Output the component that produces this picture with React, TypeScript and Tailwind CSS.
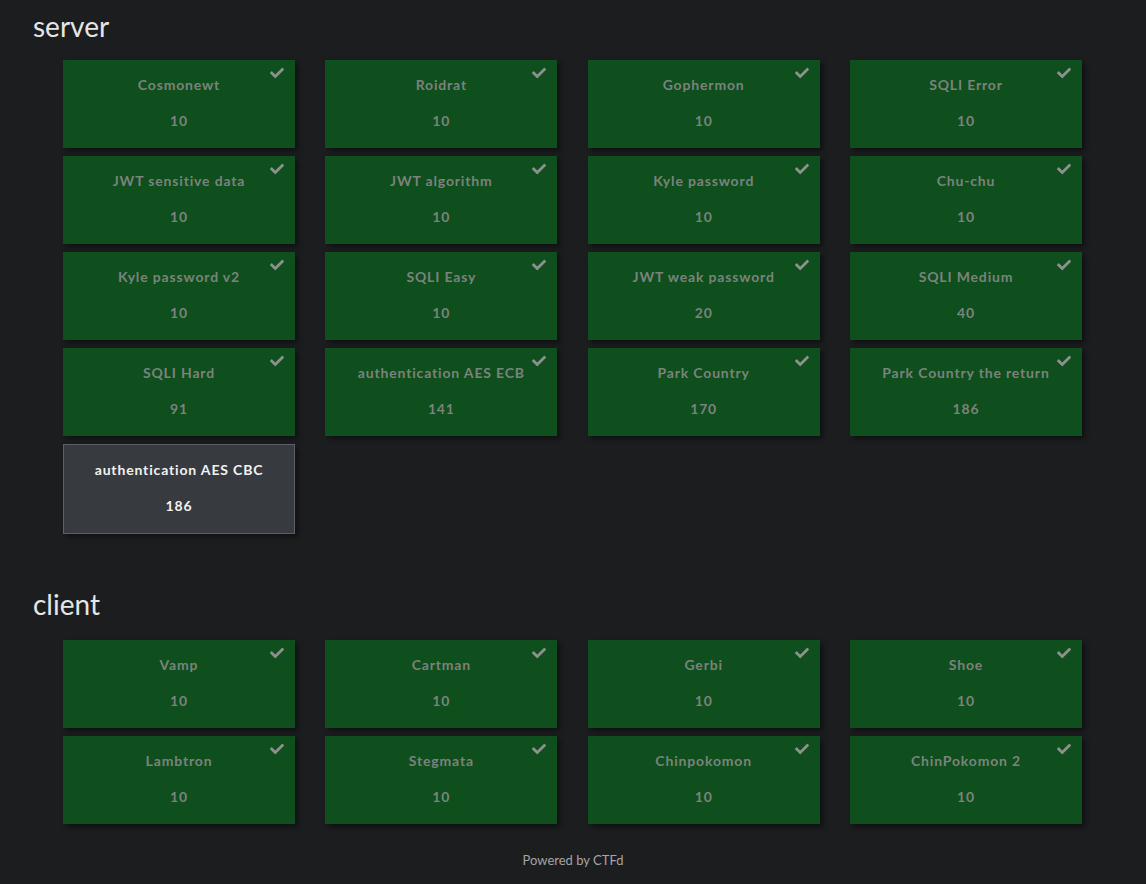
type Challenge = { name: string; value: number; solved: boolean };

const server: Challenge[] = [
  { name: "Cosmonewt", value: 10, solved: true },
  { name: "Roidrat", value: 10, solved: true },
  { name: "Gophermon", value: 10, solved: true },
  { name: "SQLI Error", value: 10, solved: true },
  { name: "JWT sensitive data", value: 10, solved: true },
  { name: "JWT algorithm", value: 10, solved: true },
  { name: "Kyle password", value: 10, solved: true },
  { name: "Chu-chu", value: 10, solved: true },
  { name: "Kyle password v2", value: 10, solved: true },
  { name: "SQLI Easy", value: 10, solved: true },
  { name: "JWT weak password", value: 20, solved: true },
  { name: "SQLI Medium", value: 40, solved: true },
  { name: "SQLI Hard", value: 91, solved: true },
  { name: "authentication AES ECB", value: 141, solved: true },
  { name: "Park Country", value: 170, solved: true },
  { name: "Park Country the return", value: 186, solved: true },
  { name: "authentication AES CBC", value: 186, solved: false },
];

const client: Challenge[] = [
  { name: "Vamp", value: 10, solved: true },
  { name: "Cartman", value: 10, solved: true },
  { name: "Gerbi", value: 10, solved: true },
  { name: "Shoe", value: 10, solved: true },
  { name: "Lambtron", value: 10, solved: true },
  { name: "Stegmata", value: 10, solved: true },
  { name: "Chinpokomon", value: 10, solved: true },
  { name: "ChinPokomon 2", value: 10, solved: true },
];

// font-awesome style solid check
function SolvedCheck() {
  return (
    <svg
      viewBox="0 0 512 512"
      className="absolute right-[11px] top-[6px] w-[14px] h-[14px] fill-[#8c918d]"
    >
      <path d="M173.898 439.404l-166.4-166.4c-9.997-9.997-9.997-26.206 0-36.204l36.203-36.204c9.997-9.998 26.207-9.998 36.204 0L192 312.69 432.095 72.596c9.997-9.997 26.207-9.997 36.204 0l36.203 36.204c9.997 9.997 9.997 26.206 0 36.204l-294.4 294.401c-9.998 9.997-26.207 9.997-36.204-.001z" />
    </svg>
  );
}

function ChallengeCard({ c }: { c: Challenge }) {
  if (!c.solved) {
    return (
      <button className="relative flex h-[90px] flex-col items-center pt-[15px] gap-4 bg-[#373a3e] border border-[#596069] text-[#f2f2f2] font-bold text-[14px] leading-5 tracking-[0.06em] shadow-[3px_3px_5px_rgba(0,0,0,0.45)]">
        <span>{c.name}</span>
        <span>{c.value}</span>
      </button>
    );
  }
  return (
    <button className="relative flex h-[88px] flex-col items-center pt-[15px] gap-4 bg-[#0f4e1d] text-[#7b837c] font-bold text-[14px] leading-5 tracking-[0.06em] shadow-[3px_3px_5px_rgba(0,0,0,0.45)]">
      <SolvedCheck />
      <span>{c.name}</span>
      <span>{c.value}</span>
    </button>
  );
}

function Category({
  title,
  items,
  gridClass,
}: {
  title: string;
  items: Challenge[];
  gridClass: string;
}) {
  return (
    <section>
      <h3 className="pl-[33px] text-[28px] leading-[34px] text-[#e6e6e6] font-normal">
        {title}
      </h3>
      <div
        className={`${gridClass} ml-[63px] w-[1019px] grid grid-cols-4 gap-x-[30.33px] gap-y-2`}
      >
        {items.map((c) => (
          <ChallengeCard key={c.name} c={c} />
        ))}
      </div>
    </section>
  );
}

export default function App() {
  return (
    <div className="min-h-[884px] bg-[#1c1d1f] font-['Lato',sans-serif] pt-[9px]">
      <Category title="server" items={server} gridClass="mt-[17px]" />
      <div className="h-[53px]" />
      <Category title="client" items={client} gridClass="mt-[19px]" />
      <footer className="mt-[27px] pb-4 text-center text-[13px] text-[#a5a5a5]">
        Powered by CTFd
      </footer>
    </div>
  );
}
